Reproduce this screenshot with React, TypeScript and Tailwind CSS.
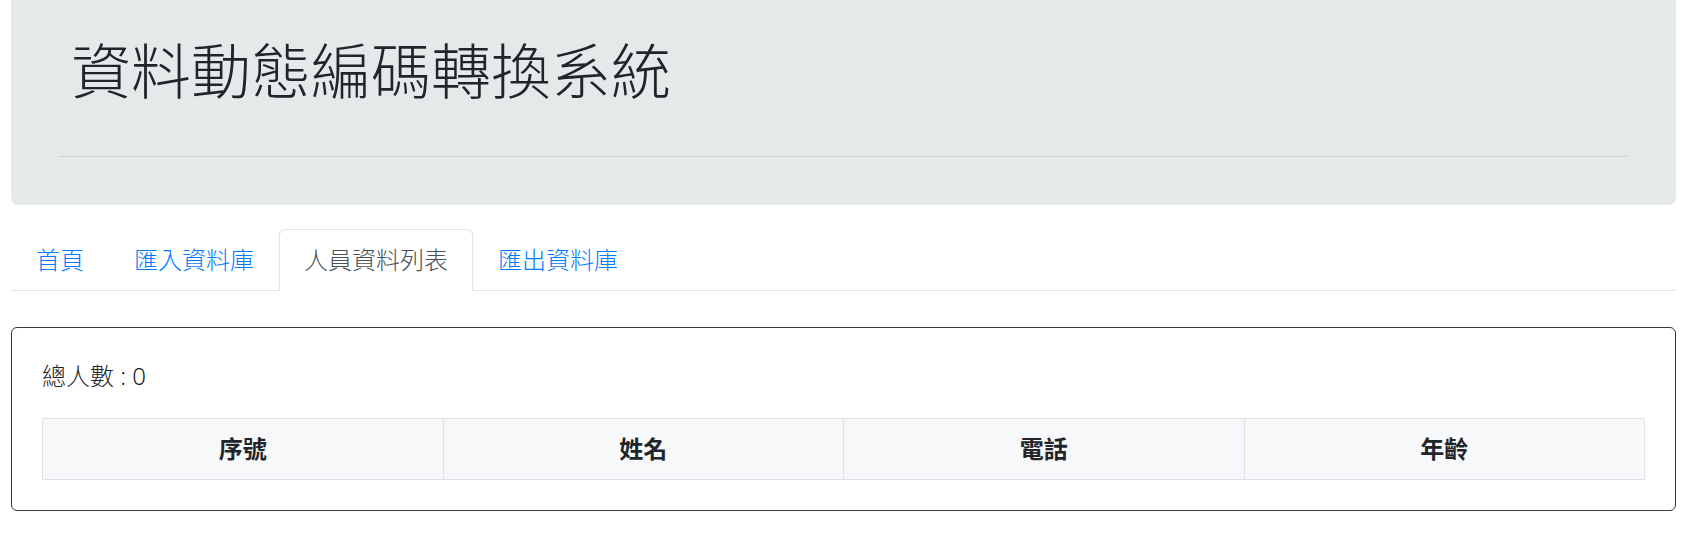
import React from 'react';

const tabs = ['首頁', '匯入資料庫', '人員資料列表', '匯出資料庫'];
const columns = ['序號', '姓名', '電話', '年齡'];

const App: React.FC = () => {
    const active = 2;

    return (
        <div
            className="min-h-[540px] bg-white pl-[11px] pr-[18px] text-[#212529]"
            style={{ fontFamily: '"Noto Sans", "Noto Sans CJK TC", sans-serif' }}
        >
            <div className="h-[205px] rounded-b-[7px] bg-[#e4eaea] px-[48px] pt-[35px]">
                <h1 className="pl-[12px] text-[60px] leading-[72px] font-light">資料動態編碼轉換系統</h1>
                <hr className="mt-[49px] border-t border-[#cfd5d6]" />
            </div>

            <nav className="mt-[24px] flex border-b border-[#dee2e6]">
                {tabs.map((t, i) => (
                    <a
                        key={t}
                        href="#"
                        className={
                            i === active
                                ? '-mb-px rounded-t-[6px] border border-[#dee2e6] border-b-white bg-white px-[24px] py-[12px] text-[24px] leading-[36px] font-light text-[#495057]'
                                : '-mb-px rounded-t-[6px] border border-transparent px-[24px] py-[12px] text-[24px] leading-[36px] font-light text-[#007bff]'
                        }
                    >
                        {t}
                    </a>
                ))}
            </nav>

            <div className="mt-[36px] rounded-[6px] border border-[#343a40] p-[30px]">
                <p className="mb-[24px] text-[24px] leading-[36px] font-light">總人數 : 0</p>
                <table className="w-full table-fixed border-collapse">
                    <thead>
                        <tr>
                            {columns.map((c) => (
                                <th
                                    key={c}
                                    className="border border-[#dee2e6] bg-[#f7f8fa] py-[12px] text-center text-[24px] leading-[36px] font-bold"
                                >
                                    {c}
                                </th>
                            ))}
                        </tr>
                    </thead>
                </table>
            </div>
        </div>
    );
};

export default App;
